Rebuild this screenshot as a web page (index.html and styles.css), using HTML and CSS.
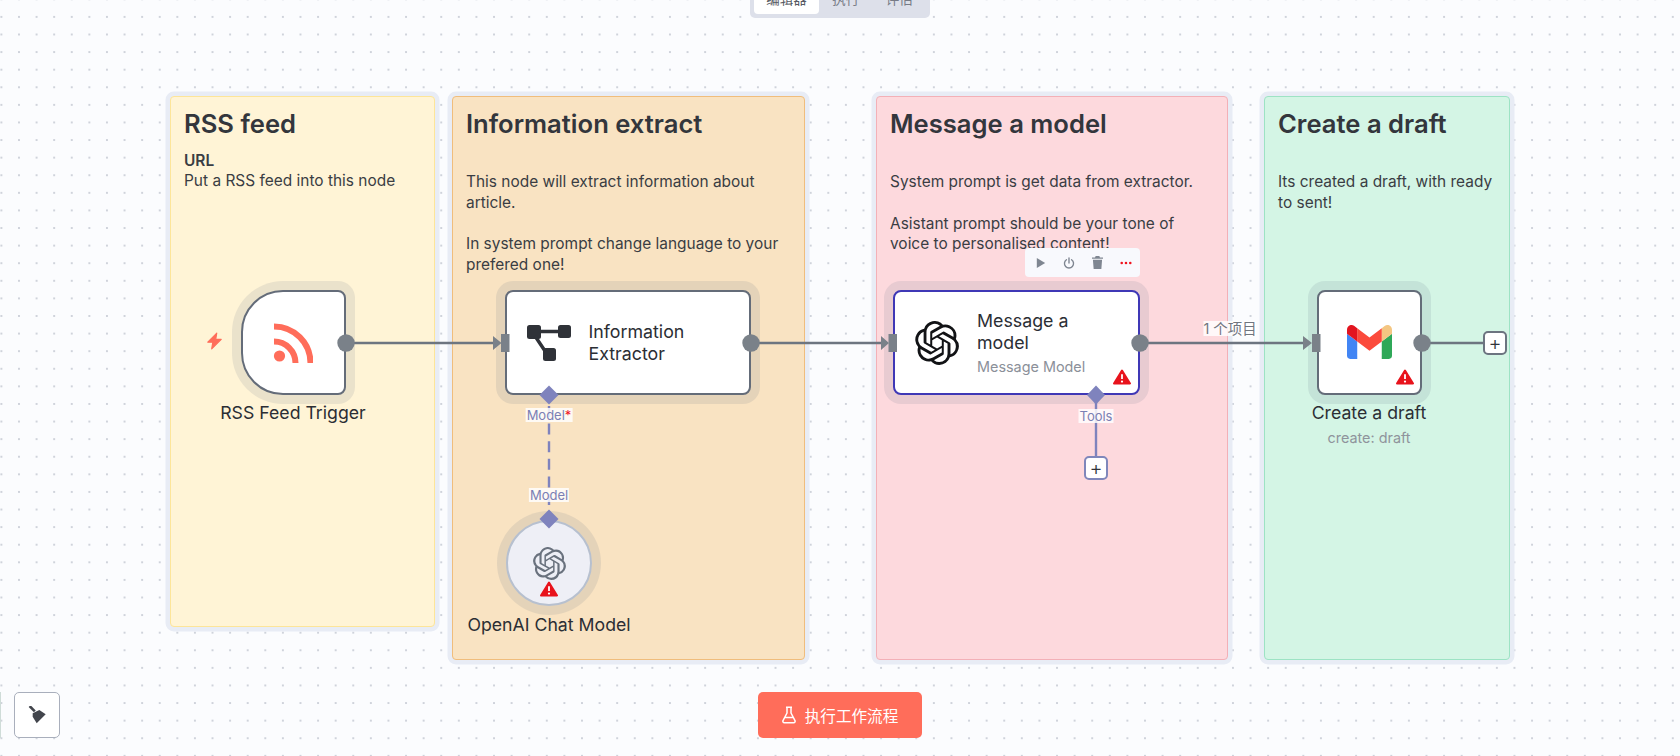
FILE: index.html
```html
<!DOCTYPE html>
<html lang="zh">
<head>
<meta charset="utf-8">
<title>Workflow</title>
<link rel="stylesheet" href="styles.css">
</head>
<body>
<main class="canvas">
  <section class="sticky sticky-rss">
    <h2>RSS feed</h2>
    <p><strong>URL</strong><br>Put a RSS feed into this node</p>
  </section>
  <section class="sticky sticky-extract">
    <h2>Information extract</h2>
    <p class="lead">This node will extract information about article.</p>
    <p class="next">In system prompt change language to your prefered one!</p>
  </section>
  <section class="sticky sticky-message">
    <h2>Message a model</h2>
    <p class="lead">System prompt is get data from extractor.</p>
    <p class="next">Asistant prompt should be your tone of voice to personalised content!</p>
  </section>
  <section class="sticky sticky-draft">
    <h2>Create a draft</h2>
    <p class="lead">Its created a draft, with ready to sent!</p>
  </section>

  <div class="node node-rss">
    <svg class="icon-rss" viewBox="0 0 40 40" width="40" height="40"><circle cx="6.5" cy="33" r="5.6" fill="#ff6d5a"/><path d="M1 3.5A36.5 36.5 0 0 1 37.5 40M1 18.5A21.5 21.5 0 0 1 22.5 40" fill="none" stroke="#ff6d5a" stroke-width="6"/></svg>
  </div>
  <div class="node node-extract">
    <svg class="icon-extract" viewBox="0 0 44 36" width="44" height="36"><rect x="0" y="0" width="14" height="14" rx="2.5" fill="#2f3238"/><rect x="31" y="0" width="13" height="13" rx="2.5" fill="#2f3238"/><rect x="16" y="23" width="13" height="13" rx="2.5" fill="#2f3238"/><path d="M12 6.5H33M8 11l10 15" stroke="#2f3238" stroke-width="3.4" fill="none"/></svg>
    <div class="node-text">Information<br>Extractor</div>
  </div>
  <div class="node node-message">
    <svg class="icon-openai" viewBox="0 0 24 24" width="44" height="44"><use href="#openai"/></svg>
    <div class="node-copy">
      <div class="node-text">Message a<br>model</div>
      <div class="node-sub">Message Model</div>
    </div>
    <svg class="warn" viewBox="0 0 18 16" width="18" height="16"><use href="#warn"/></svg>
  </div>
  <div class="node node-gmail">
    <svg class="icon-gmail" viewBox="52 42 88 66" width="45" height="34">
      <path fill="#4285f4" d="M58 108h14V74L52 59v43c0 3.32 2.69 6 6 6"/>
      <path fill="#2fa858" d="M120 108h14c3.32 0 6-2.69 6-6V59l-20 15"/>
      <path fill="#f4c682" d="M120 48v26l20-15v-8c0-7.42-8.47-11.65-14.4-7.2"/>
      <path fill="#fb4a3b" d="M72 74V48l24 18 24-18v26L96 92"/>
      <path fill="#e2141f" d="M52 51v8l20 15V48l-5.6-4.2c-5.94-4.45-14.4-.22-14.4 7.2"/>
    </svg>
    <svg class="warn" viewBox="0 0 18 16" width="18" height="16"><use href="#warn"/></svg>
  </div>
  <div class="node node-chat">
    <svg class="icon-chat" viewBox="0 0 24 24" width="33" height="33"><use href="#openai"/></svg>
    <svg class="warn warn-chat" viewBox="0 0 18 16" width="18" height="16"><use href="#warn"/></svg>
  </div>

  <svg class="edges" width="1680" height="756" viewBox="0 0 1680 756">
    <defs>
      <path id="openai" fill="currentColor" d="M22.2819 9.8211a5.9847 5.9847 0 0 0-.5157-4.9108 6.0462 6.0462 0 0 0-6.5098-2.9A6.0651 6.0651 0 0 0 4.9807 4.1818a5.9847 5.9847 0 0 0-3.9977 2.9 6.0462 6.0462 0 0 0 .7427 7.0966 5.98 5.98 0 0 0 .511 4.9107 6.051 6.051 0 0 0 6.5146 2.9001A5.9847 5.9847 0 0 0 13.2599 24a6.0557 6.0557 0 0 0 5.7718-4.2058 5.9894 5.9894 0 0 0 3.9977-2.9001 6.0557 6.0557 0 0 0-.7475-7.0729zm-9.022 12.6081a4.4755 4.4755 0 0 1-2.8764-1.0408l.1419-.0804 4.7783-2.7582a.7948.7948 0 0 0 .3927-.6813v-6.7369l2.02 1.1686a.071.071 0 0 1 .038.052v5.5826a4.504 4.504 0 0 1-4.4945 4.4944zm-9.6607-4.1254a4.4708 4.4708 0 0 1-.5346-3.0137l.142.0852 4.783 2.7582a.7712.7712 0 0 0 .7806 0l5.8428-3.3685v2.3324a.0804.0804 0 0 1-.0332.0615L9.74 19.9502a4.4992 4.4992 0 0 1-6.1408-1.6464zM2.3408 7.8956a4.485 4.485 0 0 1 2.3655-1.9728V11.6a.7664.7664 0 0 0 .3879.6765l5.8144 3.3543-2.0201 1.1685a.0757.0757 0 0 1-.071 0l-4.8303-2.7865A4.504 4.504 0 0 1 2.3408 7.872zm16.5963 3.8558L13.1038 8.364 15.1192 7.2a.0757.0757 0 0 1 .071 0l4.8303 2.7913a4.4944 4.4944 0 0 1-.6765 8.1042v-5.6772a.79.79 0 0 0-.407-.667zm2.0107-3.0231l-.142-.0852-4.7735-2.7818a.7759.7759 0 0 0-.7854 0L9.409 9.2297V6.8974a.0662.0662 0 0 1 .0284-.0615l4.8303-2.7866a4.4992 4.4992 0 0 1 6.6802 4.66zM8.3065 12.863l-2.02-1.1638a.0804.0804 0 0 1-.038-.0567V6.0742a4.4992 4.4992 0 0 1 7.3757-3.4537l-.142.0805L8.704 5.459a.7948.7948 0 0 0-.3927.6813zm1.0976-2.3654l2.602-1.4998 2.6069 1.4998v2.9994l-2.5974 1.4997-2.6067-1.4997Z"/>
      <g id="warn"><path d="M9 1.5 17 14.5H1Z" fill="#e8131c" stroke="#e8131c" stroke-width="2" stroke-linejoin="round"/><path d="M9 5.2V10" stroke="#fff" stroke-width="1.8"/><circle cx="9" cy="12.6" r="1.1" fill="#fff"/></g>
    </defs>
    <g class="edge-main">
      <path d="M346 343H494M751 343H882M1140 343H1304M1422 343H1484"/>
    </g>
    <g class="edge-port">
      <path d="M493 336 501.5 343 493 350ZM881 336 889 343 881 350ZM1303 336 1312 343 1303 350Z"/>
      <rect x="501" y="334" width="8.5" height="18"/>
      <rect x="888.5" y="334" width="8.5" height="18"/>
      <rect x="1312" y="334" width="8.5" height="18"/>
      <circle cx="346" cy="343" r="8.7"/>
      <circle cx="751" cy="343" r="8.7"/>
      <circle cx="1140" cy="343" r="8.7"/>
      <circle cx="1422" cy="343" r="8.7"/>
    </g>
    <g class="edge-ai">
      <path class="dash" d="M549 406V512"/>
      <path d="M1096 400V458"/>
    </g>
    <g class="edge-diamond">
      <path d="M549 385.5 558.5 395 549 404.5 539.5 395Z"/>
      <path d="M549 509.5 558.5 519 549 528.5 539.5 519Z"/>
      <path d="M1096 385.5 1105 395 1096 404.5 1087 395Z"/>
    </g>
  </svg>

  <span class="port-label label-model">Model<b>*</b></span>
  <span class="port-label label-model2">Model</span>
  <span class="port-label label-tools">Tools</span>
  <span class="edge-label">1 个项目</span>

  <div class="plus plus-tools">+</div>
  <div class="plus plus-next">+</div>

  <div class="title title-rss">RSS Feed Trigger</div>
  <div class="title title-chat">OpenAI Chat Model</div>
  <div class="title title-draft">Create a draft<small>create: draft</small></div>

  <svg class="bolt" viewBox="0 0 15 16" width="17" height="18"><path d="M9.5 1 1.5 9H6L5 15 13.5 6.5H8.6Z" fill="#ff6d5a" stroke="#ff6d5a" stroke-width="1" stroke-linejoin="round"/></svg>

  <div class="toolbar">
    <svg viewBox="0 0 12 14" width="10" height="12"><path d="M1 1 11 7 1 13Z" fill="#7f8691"/></svg>
    <svg viewBox="0 0 14 14" width="12" height="12"><path d="M4 3.2A5.3 5.3 0 1 0 10 3.2M7 1V7" fill="none" stroke="#7f8691" stroke-width="1.6" stroke-linecap="round"/></svg>
    <svg viewBox="0 0 12 14" width="11" height="13"><path d="M4 0H8L8.7 1.5H12V3H0V1.5H3.3ZM1 4H11L10.2 14H1.8Z" fill="#7f8691"/></svg>
    <svg viewBox="0 0 14 4" width="12" height="4"><circle cx="2" cy="2" r="1.5" fill="#f0141e"/><circle cx="7" cy="2" r="1.5" fill="#f0141e"/><circle cx="12" cy="2" r="1.5" fill="#f0141e"/></svg>
  </div>

  <nav class="tabs">
    <span class="tab tab-active">编辑器</span>
    <span class="tab">执行</span>
    <span class="tab">评估</span>
  </nav>

  <button class="run">
    <svg viewBox="0 0 14 18" width="14" height="18"><path d="M4 1.2H10M5 1.2V7L1 14.6C.6 15.6 1.2 16.8 2.4 16.8H11.6C12.8 16.8 13.4 15.6 13 14.6L9 7V1.2M3 11.5H11" fill="none" stroke="#fff" stroke-width="1.5" stroke-linejoin="round"/></svg>
    <span>执行工作流程</span>
  </button>

  <div class="edge-sliver"></div>
  <button class="clear">
    <svg viewBox="0 0 18 18" width="18" height="18"><path d="M1.6 0 6.8 5.4" stroke="#42454c" stroke-width="2.6"/><path d="M4.7 7.3 11.3 4 17.7 8.3 8.7 17.3 4.7 10.7Z" fill="#42454c"/></svg>
  </button>
</main>
</body>
</html>
```
FILE: styles.css
```css
* { box-sizing: border-box; }
html, body { margin: 0; height: 100%; }
body { overflow: hidden; font-family: Inter, "Noto Sans CJK SC", sans-serif; color: #303339; }
.canvas {
  position: relative;
  width: 1680px;
  height: 756px;
  overflow: hidden;
  background-color: #fbfcfe;
  background-image: radial-gradient(circle at center, #c0c5cf 0, #c0c5cf .6px, transparent .95px);
  background-size: 17.6px 17.6px;
  background-position: 10.2px 8.1px;
}

.sticky {
  position: absolute;
  top: 96px;
  height: 564px;
  padding: 12px 13px;
  border: 1.5px solid;
  border-radius: 4px;
  box-shadow: 0 0 0 4.5px #e8ecf5;
}
.sticky h2 { margin: 0 0 21px; font-size: 25.6px; line-height: 29px; font-weight: 600; color: #33363c; }
.sticky p { margin: 0; font-size: 15.45px; line-height: 20.8px; color: #3a3d43; }
.sticky strong { font-weight: 600; }
.sticky .lead { margin-top: 34px; }
.sticky .next { margin-top: 20.8px; }
.sticky-rss { left: 170px; width: 265px; height: 531px; background: #fff4d6; border-color: #fde599; }
.sticky-rss h2 { margin-bottom: 12.5px; }
.sticky-extract { left: 452px; width: 353px; background: #f9e3c2; border-color: #f0bd7c; }
.sticky-message { left: 876px; width: 352px; background: #fdd9dd; border-color: #f3b0b7; }
.sticky-draft { left: 1264px; width: 246px; background: #d4f5e5; border-color: #9de3c4; }

.node {
  position: absolute;
  top: 290px;
  height: 105px;
  display: flex;
  align-items: center;
  background: #fff;
  border: 2px solid #646c79;
  border-radius: 8px;
  box-shadow: 0 0 0 9px rgba(96, 108, 130, .13);
}
.node-rss { left: 241px; width: 105px; justify-content: center; border-radius: 42px 8px 8px 42px; }
.icon-rss { position: relative; left: -1px; }
.node-extract { left: 505px; width: 246px; padding-left: 20px; gap: 17.5px; }
.node-message { left: 893px; width: 247px; padding-left: 20px; gap: 18px; border-color: #3f38b6; }
.node-gmail { left: 1317px; width: 105px; justify-content: center; }
.icon-gmail { position: relative; top: -1px; }
.node-chat { left: 506px; top: 519.5px; width: 86px; height: 86px; border-radius: 50%; flex-direction: column; justify-content: center; gap: 1px; background: #eeeff6; border-color: #b7c0cf; padding-top: 18px; }
.node-text { font-size: 17.8px; line-height: 22px; color: #2b2e34; }
.node-sub { margin-top: 3px; font-size: 14.4px; line-height: 20px; color: #8b9099; }
.node-copy { position: relative; top: 1px; }
.icon-openai { color: #121316; flex: none; }
.icon-chat { color: #6a727e; flex: none; }
.icon-extract { flex: none; }
.warn { position: absolute; right: 7px; bottom: 8px; }
.node-gmail .warn { right: 6px; }
.warn-chat { position: static; flex: none; }

.edges { position: absolute; left: 0; top: 0; pointer-events: none; }
.edge-main path { fill: none; stroke: #6d7580; stroke-width: 2.4; }
.edge-port { fill: #7a8189; }
.edge-ai path { fill: none; stroke: #7f83bd; stroke-width: 2.4; }
.edge-ai .dash { stroke-dasharray: 11 6.6; }
.edge-diamond { fill: #7f83bd; }

.port-label, .edge-label {
  position: absolute;
  transform: translateX(-50%);
  background: rgba(255, 255, 255, .82);
  white-space: nowrap;
}
.port-label { font-size: 13px; line-height: 14px; color: #7b80b4; padding: 0 1px; }
.port-label b { color: #f0141e; font-weight: 400; }
.label-model { left: 549px; top: 408px; }
.label-model2 { left: 549px; top: 487.5px; }
.label-tools { left: 1096px; top: 409px; }
.edge-label { left: 1230px; top: 321px; font-size: 14.4px; line-height: 15px; color: #71767f; }

.plus {
  position: absolute;
  width: 24px;
  height: 24px;
  display: flex;
  align-items: center;
  justify-content: center;
  font-size: 20px;
  line-height: 1;
  font-weight: 300;
  color: #30333a;
  background: #fff;
  border: 2px solid #6c7480;
  border-radius: 5px;
}
.plus-tools { left: 1084px; top: 456px; border-color: #7f87bb; }
.plus-next { left: 1483px; top: 331px; }

.title { position: absolute; transform: translateX(-50%); text-align: center; white-space: nowrap; font-size: 17.7px; line-height: 22px; color: #2b2e34; }
.title small { display: block; margin-top: 4px; font-size: 14.4px; line-height: 20px; color: #8f949c; }
.title-rss { left: 293px; top: 402px; }
.title-chat { left: 549px; top: 614px; }
.title-draft { left: 1369px; top: 402px; }

.bolt { position: absolute; left: 206px; top: 332px; }

.toolbar {
  position: absolute;
  left: 1025px;
  top: 248px;
  width: 115px;
  height: 29px;
  padding: 0 8px 0 11px;
  display: flex;
  align-items: center;
  justify-content: space-between;
  background: #f8f9fd;
  border-radius: 4px;
}

.tabs {
  position: absolute;
  left: 750px;
  top: -22px;
  width: 180px;
  height: 40px;
  padding: 4px;
  display: flex;
  background: #dde0ea;
  border-radius: 5px;
}
.tab { width: 55px; height: 32px; display: flex; align-items: center; justify-content: center; font-size: 13.5px; color: #777b86; }
.tab-active { width: 67px; background: #fff; color: #555962; border-radius: 4px; }

.run {
  position: absolute;
  left: 758px;
  top: 692px;
  width: 164px;
  height: 46px;
  display: flex;
  align-items: center;
  justify-content: center;
  gap: 9px;
  padding: 0;
  font: 400 15.6px Inter, "Noto Sans CJK SC", sans-serif;
  color: #fff;
  background: #ff6d5a;
  border: 0;
  border-radius: 5px;
}
.clear {
  position: absolute;
  left: 14px;
  top: 692px;
  width: 46px;
  height: 46px;
  display: flex;
  align-items: center;
  justify-content: center;
  padding: 0;
  background: #fff;
  border: 1px solid #a9afbc;
  border-radius: 5px;
}
.edge-sliver { position: absolute; left: 0; top: 692px; width: 1px; height: 46px; background: #cfdcd8; }
```
